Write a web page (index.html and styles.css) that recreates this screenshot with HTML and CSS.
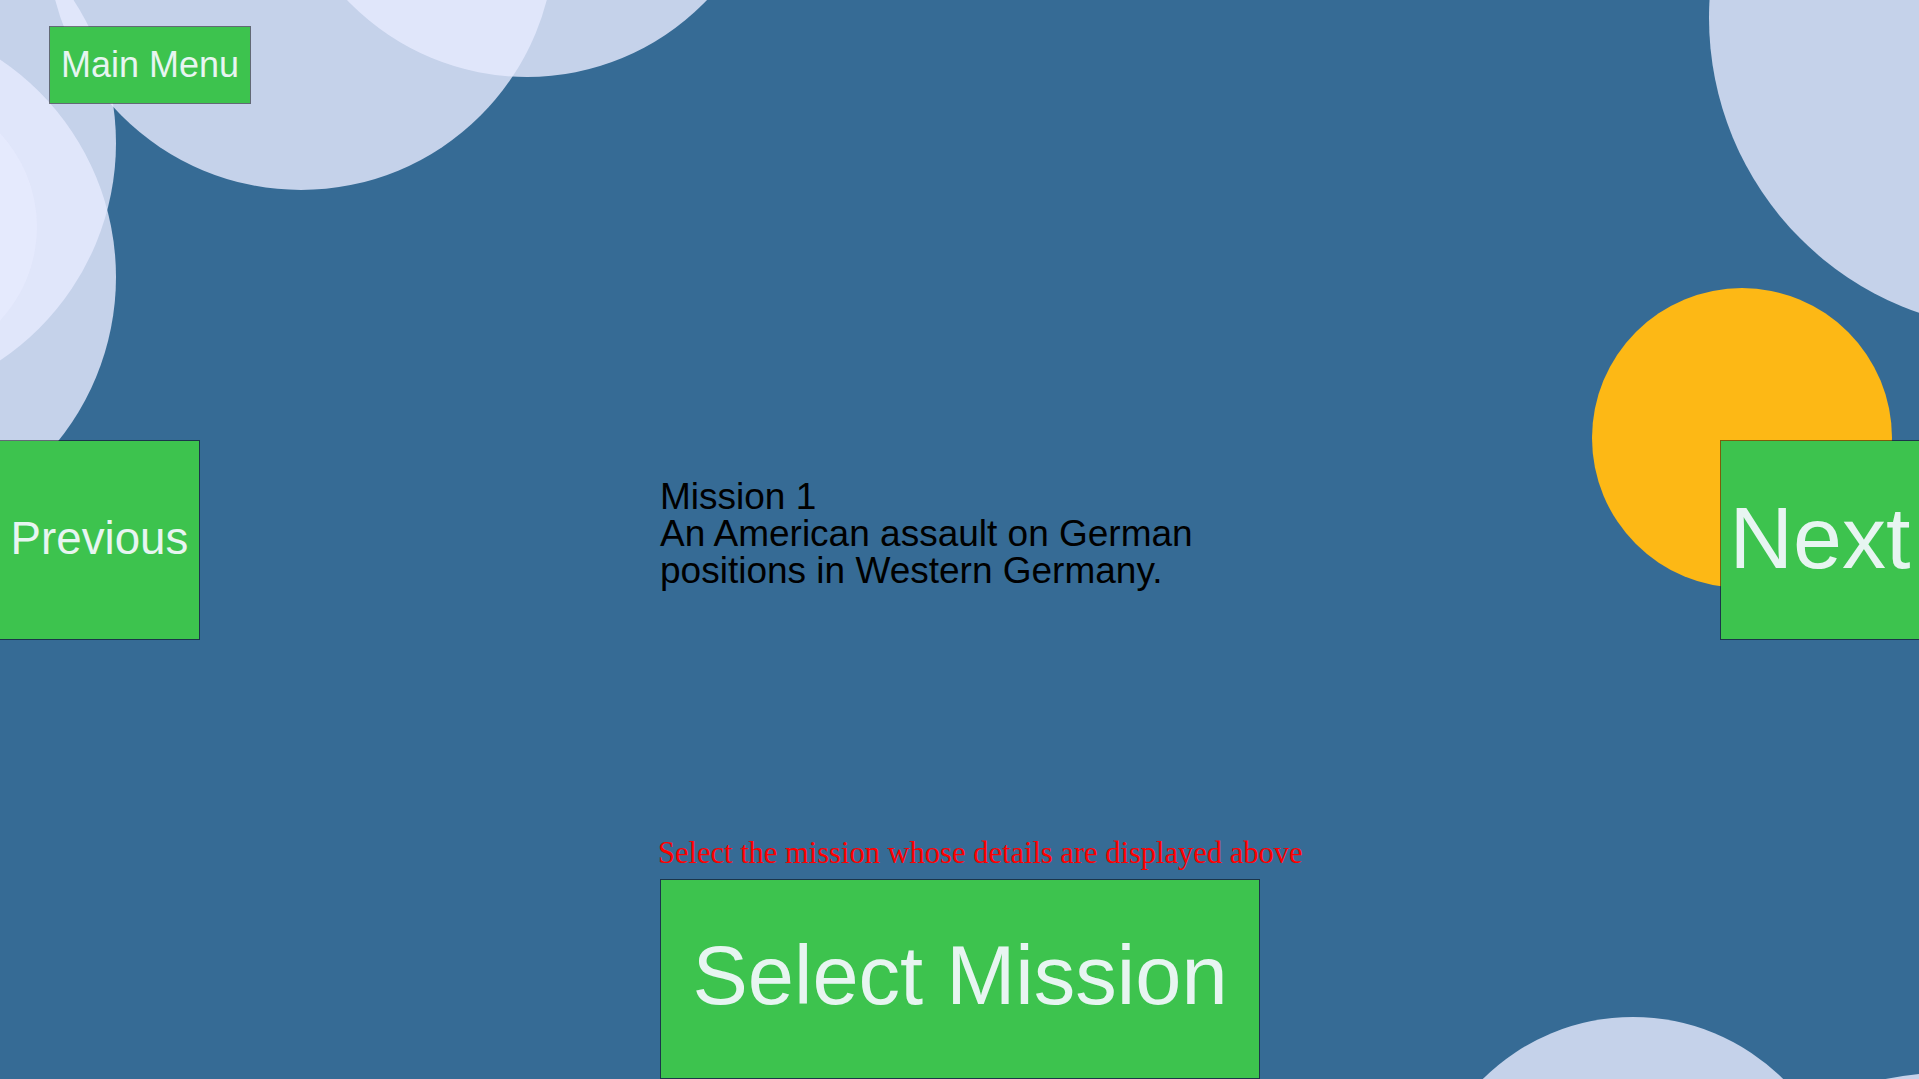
FILE: index.html
```html
<!DOCTYPE html>
<html lang="en">
<head>
<meta charset="utf-8">
<title>Mission Select</title>
<link rel="stylesheet" href="styles.css">
</head>
<body>
<div class="page">
  <svg class="backdrop" viewBox="0 0 1920 1079" xmlns="http://www.w3.org/2000/svg" aria-hidden="true">
    <g class="bubbles">
      <circle cx="301" cy="-64" r="254"/>
      <circle cx="527" cy="-172" r="249"/>
      <circle cx="-146" cy="143" r="262"/>
      <circle cx="-146" cy="277" r="262"/>
      <circle cx="-100" cy="227" r="137"/>
      <circle cx="2021" cy="18" r="312"/>
      <circle cx="1633" cy="1230" r="213"/>
      <circle cx="1960" cy="1472" r="400"/>
    </g>
    <circle class="sun" cx="1742" cy="438" r="150"/>
  </svg>

  <header class="top-bar">
    <button class="btn btn-menu">Main Menu</button>
  </header>

  <main class="mission-row">
    <button class="btn btn-side btn-prev">Previous</button>
    <div class="mission-info">
      <p class="mission-text">Mission 1<br>An American assault on German positions in Western Germany.</p>
    </div>
    <button class="btn btn-side btn-next">Next</button>
  </main>

  <footer class="select-area">
    <p class="hint">Select the mission whose details are displayed above</p>
    <button class="btn btn-select">Select Mission</button>
  </footer>
</div>
</body>
</html>
```

FILE: styles.css
```css
html, body {
  margin: 0;
  padding: 0;
  overflow: hidden;
}

body {
  background: #366b95;
}

.page {
  position: relative;
  width: 1920px;
  height: 1079px;
  overflow: hidden;
  font-family: "Liberation Sans", Arial, sans-serif;
}

.backdrop {
  position: absolute;
  left: 0;
  top: 0;
  width: 1920px;
  height: 1079px;
  z-index: 0;
}

.bubbles circle {
  fill: rgb(230, 234, 254);
  fill-opacity: 0.81;
}

.sun {
  fill: #fdb815;
}

.top-bar,
.mission-row,
.select-area {
  position: relative;
  z-index: 1;
}

.btn {
  box-sizing: border-box;
  margin: 0;
  padding: 0;
  display: flex;
  align-items: center;
  justify-content: center;
  background: #3dc34e;
  background-clip: padding-box;
  border: 1px solid rgba(0, 0, 0, 0.5);
  border-radius: 0;
  color: #e7f5f1;
  font-family: "Liberation Sans", Arial, sans-serif;
  line-height: 1;
  white-space: nowrap;
  cursor: pointer;
}

.top-bar {
  height: 78px;
  padding: 26px 0 0 49px;
}

.btn-menu {
  width: 202px;
  height: 78px;
  font-size: 36px;
}

.mission-row {
  display: grid;
  grid-template-columns: 200px 1fr 600px 1fr 200px;
  height: 200px;
  margin-top: 336px;
}

.btn-side {
  width: 200px;
  height: 200px;
  padding-bottom: 5px;
}

.btn-prev {
  grid-column: 1;
  margin-left: -1px;
  width: 201px;
  font-size: 45.7px;
  padding-bottom: 3px;
}

.btn-next {
  grid-column: 5;
  font-size: 88px;
}

.mission-info {
  grid-column: 3;
  padding-top: 38px;
}

.mission-text {
  margin: 0;
  font-size: 37px;
  line-height: 37px;
  color: #000;
}

.select-area {
  width: 600px;
  margin: 196px auto 0;
}

.hint {
  margin: 0 0 0 -2px;
  font-family: "Liberation Serif", "Times New Roman", serif;
  font-size: 30.5px;
  line-height: 34px;
  color: #ff0000;
  white-space: nowrap;
}

.btn-select {
  width: 600px;
  height: 200px;
  margin-top: 9px;
  font-size: 83px;
  padding-bottom: 8px;
}
```
